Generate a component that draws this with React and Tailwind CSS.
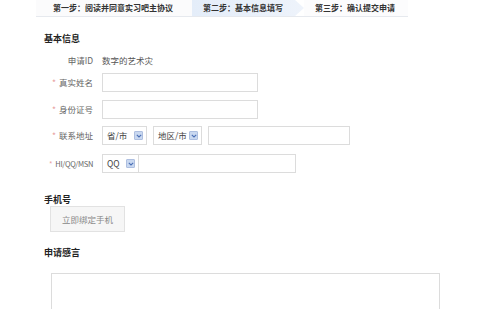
import React from "react";

const font = { fontFamily: '"Noto Sans CJK SC", "Liberation Sans", sans-serif' };

function Arrow() {
  return (
    <span className="inline-flex h-[9px] w-[9px] items-center justify-center rounded-[1px] bg-[#c9d8f0] border border-[#aebfe0]">
      <svg width="6" height="4" viewBox="0 0 6 4">
        <path d="M0.8 0.8 L3 3 L5.2 0.8" fill="none" stroke="#4a6fb5" strokeWidth="1.1" />
      </svg>
    </span>
  );
}

function Select({ text, w }) {
  return (
    <div className={`flex h-[19px] items-center justify-between border border-[#dcdcdc] bg-white pl-[4px] pr-[3px] ${w}`}>
      <span className="text-[8.5px] leading-none text-[#444]">{text}</span>
      <Arrow />
    </div>
  );
}

function Label({ children, star, narrow }) {
  return (
    <div className={`flex w-[49px] shrink-0 justify-end leading-none text-[#666] whitespace-nowrap ${narrow ? "text-[7.5px] tracking-[-0.3px]" : "text-[8.5px]"}`}>
      {star && <span className="mr-[3px] text-[#e8a0a0]">*</span>}
      {children}
    </div>
  );
}

export default function App() {
  return (
    <div className="h-[309px] w-[500px] overflow-hidden bg-white" style={font}>
      {/* step bar */}
      <div className="ml-[36px] flex h-[17px] w-[372px] border-b border-[#e6e9ee] text-[8px] font-bold leading-none text-[#333]">
        <div className="flex w-[156px] items-center bg-[#fbfbfc] pl-[17px]">第一步：阅读并同意实习吧主协议</div>
        <div className="flex w-[112px] items-center bg-gradient-to-r from-[#e4edf9] to-[#eef3fb] pl-[11px] [clip-path:polygon(0_0,92%_0,100%_50%,92%_100%,0_100%)]">
          第二步：基本信息填写
        </div>
        <div className="flex flex-1 items-center bg-[#fcfcfd] pl-[11px]">第三步：确认提交申请</div>
      </div>

      <div className="pl-[44px]">
        <div className="mt-[16px] text-[9px] font-bold leading-[12px] text-[#222]">基本信息</div>

        <div className="mt-[6px] flex h-[19px] items-center gap-[9px]">
          <Label>申请ID</Label>
          <span className="text-[8.5px] leading-none text-[#555]">数字的艺术灾</span>
        </div>

        <div className="mt-[3px] flex h-[19px] items-center gap-[9px]">
          <Label star>真实姓名</Label>
          <div className="h-[19px] w-[156px] border border-[#dcdcdc] bg-white" />
        </div>

        <div className="mt-[8px] flex h-[19px] items-center gap-[9px]">
          <Label star>身份证号</Label>
          <div className="h-[19px] w-[156px] border border-[#dcdcdc] bg-white" />
        </div>

        <div className="mt-[7px] flex h-[19px] items-center gap-[9px]">
          <Label star>联系地址</Label>
          <div className="flex items-center gap-[6px]">
            <Select text="省/市" w="w-[45px]" />
            <Select text="地区/市" w="w-[49px]" />
            <div className="h-[19px] w-[142px] border border-[#dcdcdc] bg-white" />
          </div>
        </div>

        <div className="mt-[9px] flex h-[19px] items-center gap-[9px]">
          <Label star narrow>HI/QQ/MSN</Label>
          <div className="flex h-[19px] w-[194px] items-center border border-[#dcdcdc] bg-white">
            <div className="flex h-full w-[36px] items-center justify-between border-r border-[#dcdcdc] pl-[4px] pr-[3px]">
              <span className="text-[8.5px] leading-none text-[#444]">QQ</span>
              <Arrow />
            </div>
          </div>
        </div>

        <div className="mt-[21px] text-[9px] font-bold leading-[12px] text-[#222]">手机号</div>
        <button className="ml-[6px] mt-0 flex h-[26px] w-[75px] items-center justify-center border border-[#e2e2e2] bg-[#f6f6f6] text-[8.5px] text-[#888]">
          立即绑定手机
        </button>

        <div className="mt-[15px] text-[9px] font-bold leading-[12px] text-[#222]">申请感言</div>
        <div className="ml-[7px] mt-[14px] h-[60px] w-[389px] border border-[#dcdcdc] bg-white" />
      </div>
    </div>
  );
}
